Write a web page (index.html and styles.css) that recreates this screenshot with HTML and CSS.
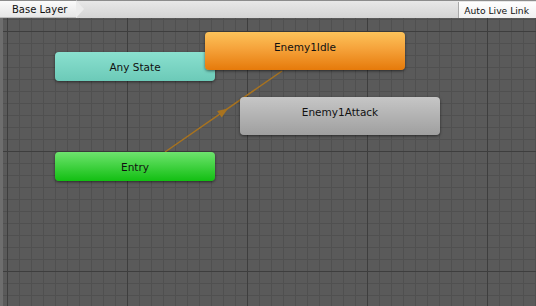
FILE: index.html
```html
<!DOCTYPE HTML>
<html>
<head>
<meta charset="UTF-8" />
<title>Animator</title>
<link rel="stylesheet" href="styles.css">
</head>
<body>
<div class="toolbar">
	<div class="crumb">Base Layer</div>
	<div class="liveLink">Auto Live Link</div>
</div>
<div class="graph">
	<svg class="transitions" width="536" height="288" viewBox="0 0 536 288">
		<line x1="165" y1="134" x2="282" y2="53" stroke="#a8731f" stroke-width="1.5" />
		<polygon points="228,90.5 221.7,99.6 217.1,93" fill="#a8731f" />
	</svg>
	<div class="node anyState" style="left:55px; top:34px;">Any State</div>
	<div class="node entry" style="left:55px; top:134px;">Entry</div>
	<div class="node big idle" style="left:205px; top:14px;">Enemy1Idle</div>
	<div class="node big attack" style="left:240px; top:79px;">Enemy1Attack</div>
</div>
</body>
</html>
```

FILE: styles.css
```css
html,
body {
	width: 100%;
	height: 100%;
	padding: 0;
	margin: 0;
	box-sizing: border-box;
	overflow: hidden;
	font-family: "DejaVu Sans", sans-serif;
	font-size: 10px;
	color: #111;
}

.toolbar {
	height: 18px;
	display: flex;
	justify-content: space-between;
	align-items: stretch;
	background: linear-gradient(#e8e8e8, #d4d4d4);
	border-top: 1px solid #8c8c8c;
	box-sizing: border-box;
}

.crumb {
	position: relative;
	display: flex;
	align-items: center;
	padding: 0 0 0 12px;
	width: 64px;
	background: linear-gradient(#fbfbfb, #e6e6e6);
	border-bottom: 1px solid #bdbdbd;
}

.crumb::after {
	content: "";
	position: absolute;
	right: -8px;
	top: -1px;
	border-top: 9px solid transparent;
	border-bottom: 9px solid transparent;
	border-left: 8px solid #ececec;
}

.liveLink {
	display: flex;
	align-items: center;
	padding: 0 7px 0 5px;
	margin-top: 1px;
	font-size: 9.2px;
	background: linear-gradient(#ffffff, #f0f0f0);
	border-left: 1px solid #a9a9a9;
}

.graph {
	position: relative;
	height: 288px;
	background-color: #5a5a5a;
	background-image:
		linear-gradient(to right, #3e3e3e 1px, transparent 1px),
		linear-gradient(to bottom, #3e3e3e 1px, transparent 1px),
		linear-gradient(to right, #505050 1px, transparent 1px),
		linear-gradient(to bottom, #505050 1px, transparent 1px);
	background-size: 120px 120px, 120px 120px, 12px 12px, 12px 12px;
	background-position: 4px 13px, 4px 13px, 4px 1px, 4px 1px;
	border-left: 3px solid #6e6e6e;
	box-sizing: border-box;
}

.transitions {
	position: absolute;
	left: -3px;
	top: 0;
}

.node {
	position: absolute;
	width: 160px;
	height: 29px;
	margin-left: -3px;
	display: flex;
	align-items: center;
	justify-content: center;
	font-size: 10.5px;
	border-radius: 4px;
	box-shadow: 0 1px 3px rgba(0, 0, 0, 0.55);
	box-sizing: border-box;
}

.big {
	width: 200px;
	height: 38px;
	padding-bottom: 8px;
}

.anyState {
	background: linear-gradient(#8ae0cf, #6ccab8);
}

.entry {
	background: linear-gradient(#6ee46e, #12bf12);
}

.idle {
	background: linear-gradient(#fdc35a, #f5a23a 45%, #e67a0a);
}

.attack {
	background: linear-gradient(#c6c6c6, #9f9f9f);
}
```
